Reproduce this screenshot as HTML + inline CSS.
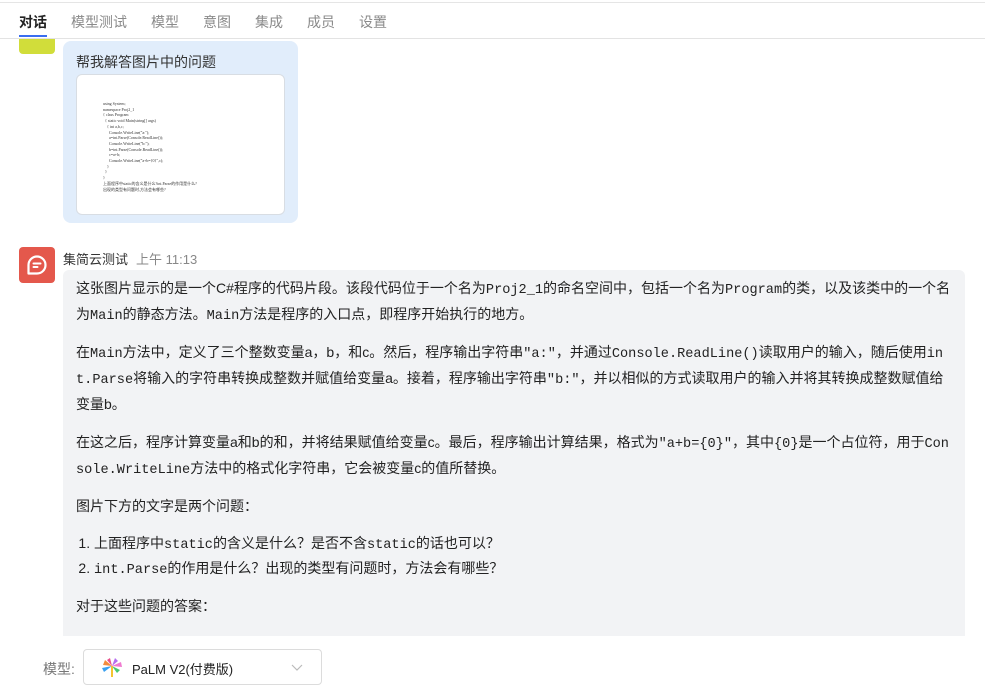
<!DOCTYPE html>
<html><head><meta charset="utf-8"><style>
*{margin:0;padding:0;box-sizing:border-box}
body{width:985px;height:688px;overflow:hidden;background:#fff;font-family:"Liberation Sans","Noto Sans CJK SC",sans-serif;color:#222;position:relative}
.top{position:absolute;left:0;top:2px;width:985px;height:1px;background:#e5e5e5}
.tabs{position:absolute;left:0;top:3px;width:985px;height:36px;border-bottom:1px solid #e3e3e3;font-size:14px}
.tabs span{position:absolute;top:9px;color:#8a8a8a}
.tabs span.a{color:#222;font-weight:bold}
.ul{position:absolute;left:19px;top:35px;width:28px;height:2px;background:#3a6df0}
.av1{position:absolute;left:19px;top:39px;width:36px;height:15px;background:#d1dd3a;border-radius:0 0 4px 4px}
.ub{position:absolute;left:63px;top:41px;width:235px;height:182px;background:#e1edfb;border-radius:8px}
.ub .t{position:absolute;left:13px;top:11px;font-size:14px;color:#333}
.img{position:absolute;left:13px;top:33px;width:209px;height:141px;background:#fff;border:1px solid #d8dde3;border-radius:6px;font-family:"Liberation Serif",serif;font-size:4px;line-height:5.7px;color:#333;padding:26px 0 0 26px;white-space:nowrap;overflow:hidden}
.av2{position:absolute;left:19px;top:247px;width:36px;height:36px;background:#e4584c;border-radius:4px}
.name{position:absolute;left:63px;top:249px;font-size:13px;color:#333}
.name i{font-style:normal;color:#888;margin-left:8px}
.msg{position:absolute;left:63px;top:270px;width:902px;height:366px;background:#f2f3f5;border-radius:6px 6px 0 0;padding:5px 12px 0 13px;font-size:14px;line-height:26px;color:#222;overflow:hidden;word-break:break-all}
.msg p{margin-bottom:12px}
code{font-family:"Liberation Mono",monospace;font-size:13.6px;line-height:1}
ol{margin:0 0 12px 18px;line-height:25px}
.lbl{position:absolute;left:43px;top:659px;font-size:14px;color:#777}
.sel{position:absolute;left:83px;top:649px;width:239px;height:36px;border:1px solid #dcdcdc;border-radius:4px}
.sel .tx{position:absolute;left:48px;top:9px;font-size:13px;color:#222}
</style></head><body>
<div class="top"></div>
<div class="tabs">
<span class="a" style="left:19px">对话</span>
<span style="left:71px">模型测试</span>
<span style="left:151px">模型</span>
<span style="left:203px">意图</span>
<span style="left:255px">集成</span>
<span style="left:307px">成员</span>
<span style="left:359px">设置</span>
</div>
<div class="ul"></div>
<div class="av1"></div>
<div class="ub"><div class="t">帮我解答图片中的问题</div>
<div class="img">using System;<br>namespace Proj2_1<br>{ class Program<br>&nbsp;&nbsp;{ static void Main(string[] args)<br>&nbsp;&nbsp;&nbsp;&nbsp;{ int a,b,c;<br>&nbsp;&nbsp;&nbsp;&nbsp;&nbsp;&nbsp;Console.WriteLine("a:");<br>&nbsp;&nbsp;&nbsp;&nbsp;&nbsp;&nbsp;a=int.Parse(Console.ReadLine());<br>&nbsp;&nbsp;&nbsp;&nbsp;&nbsp;&nbsp;Console.WriteLine("b:");<br>&nbsp;&nbsp;&nbsp;&nbsp;&nbsp;&nbsp;b=int.Parse(Console.ReadLine());<br>&nbsp;&nbsp;&nbsp;&nbsp;&nbsp;&nbsp;c=a+b;<br>&nbsp;&nbsp;&nbsp;&nbsp;&nbsp;&nbsp;Console.WriteLine("a+b={0}",c);<br>&nbsp;&nbsp;&nbsp;&nbsp;}<br>&nbsp;&nbsp;}<br>}<br>上面程序中static的含义是什么?int.Parse的作用是什么?<br>出现的类型有问题时,方法会有哪些?</div></div>
<div class="av2"><svg width="36" height="36" viewBox="0 0 36 36"><path d="M9.5 26.5V18A8.5 8.5 0 1 1 18 26.5Z" fill="none" stroke="#fff" stroke-width="2.2" stroke-linejoin="round"/><path d="M14.5 16.5h7M14.5 20h4" stroke="#fff" stroke-width="2" stroke-linecap="round"/></svg></div>
<div class="name">集简云测试<i>上午 11:13</i></div>
<div class="msg">
<p>这张图片显示的是一个C#程序的代码片段。该段代码位于一个名为<code>Proj2_1</code>的命名空间中，包括一个名为<code>Program</code>的类，以及该类中的一个名为<code>Main</code>的静态方法。<code>Main</code>方法是程序的入口点，即程序开始执行的地方。</p>
<p>在<code>Main</code>方法中，定义了三个整数变量a，b，和c。然后，程序输出字符串<code>"a:"</code>，并通过<code>Console.ReadLine()</code>读取用户的输入，随后使用<code>int.Parse</code>将输入的字符串转换成整数并赋值给变量a。接着，程序输出字符串<code>"b:"</code>，并以相似的方式读取用户的输入并将其转换成整数赋值给变量b。</p>
<p>在这之后，程序计算变量a和b的和，并将结果赋值给变量c。最后，程序输出计算结果，格式为<code>"a+b={0}"</code>，其中<code>{0}</code>是一个占位符，用于<code>Console.WriteLine</code>方法中的格式化字符串，它会被变量c的值所替换。</p>
<p>图片下方的文字是两个问题：</p>
<ol><li>上面程序中<code>static</code>的含义是什么？是否不含<code>static</code>的话也可以？</li><li><code>int.Parse</code>的作用是什么？出现的类型有问题时，方法会有哪些？</li></ol>
<p>对于这些问题的答案：</p>
</div>
<div class="lbl">模型:</div>
<div class="sel">
<svg style="position:absolute;left:17px;top:8px" width="22" height="20" viewBox="0 0 22 20"><path d="M11 8L4 2L2 7Z" fill="#f28b3c"/><path d="M11 8L9 0L6 2Z" fill="#e8508a"/><path d="M11 8L14 0L17 3Z" fill="#b56ff0"/><path d="M11 8L20 4L21 9Z" fill="#f07ad0"/><path d="M11 8L1 10L3 14Z" fill="#3aa0f0"/><path d="M11 8L19 12L16 15Z" fill="#4ac870"/><path d="M10 8h2v11h-2z" fill="#f4c430"/></svg>
<span class="tx">PaLM V2(付费版)</span>
<svg style="position:absolute;left:207px;top:14px" width="12" height="8" viewBox="0 0 12 8"><path d="M1 1l5 5 5-5" fill="none" stroke="#bbb" stroke-width="1.2"/></svg>
</div>
</body></html>
